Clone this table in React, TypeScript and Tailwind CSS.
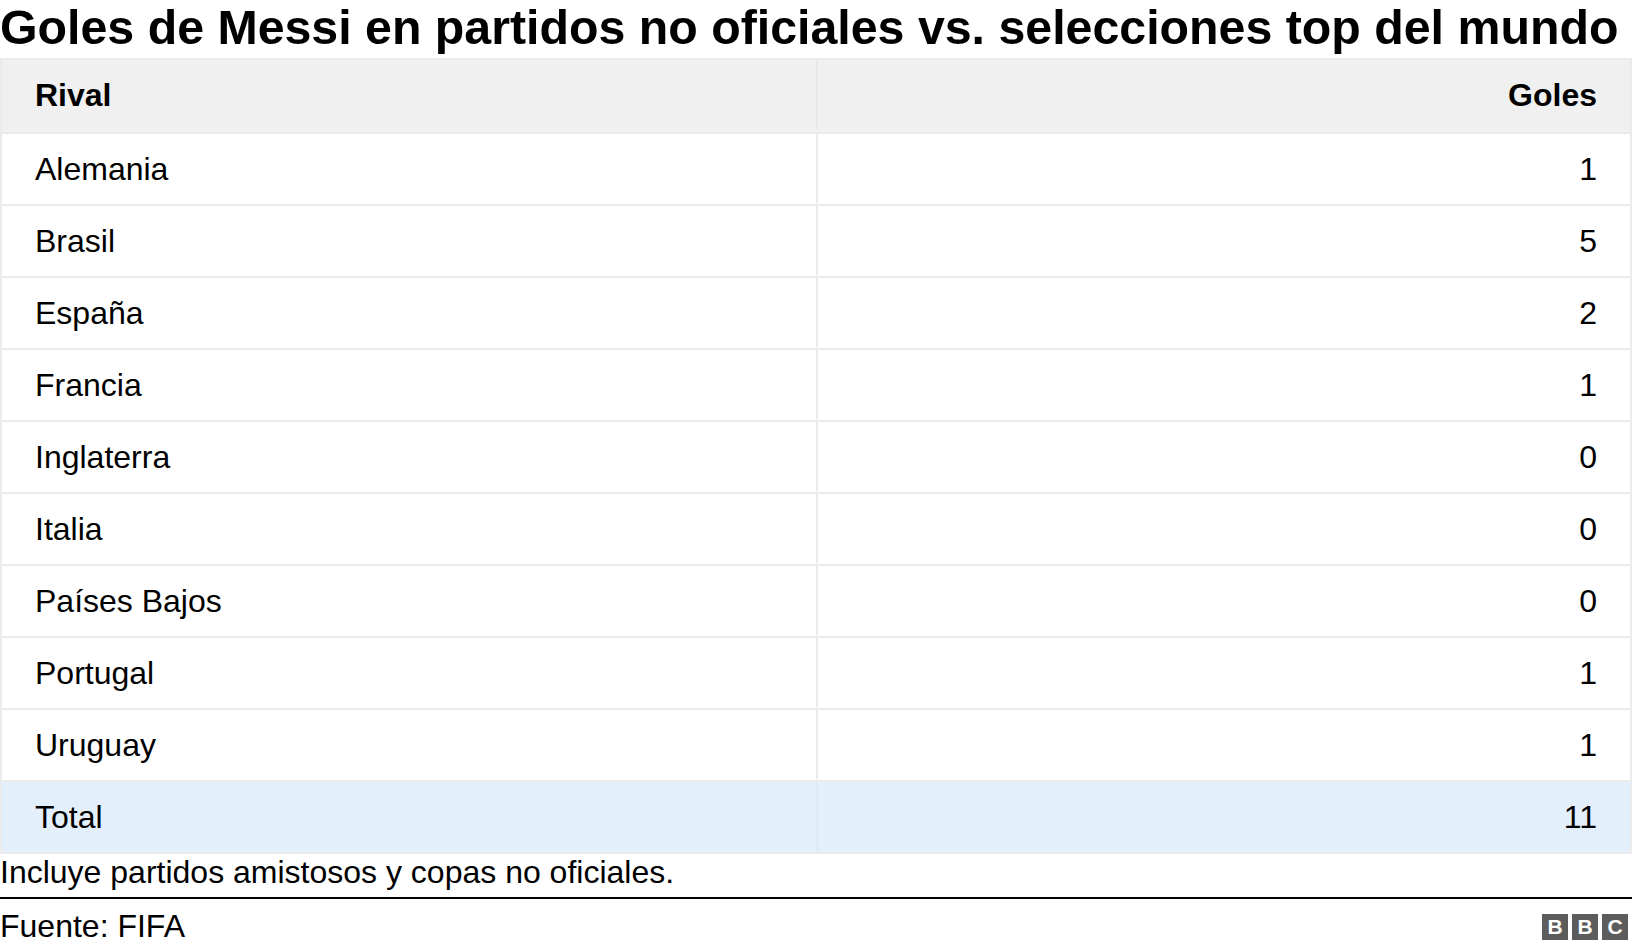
const rows: [string, string][] = [
  ["Alemania", "1"],
  ["Brasil", "5"],
  ["España", "2"],
  ["Francia", "1"],
  ["Inglaterra", "0"],
  ["Italia", "0"],
  ["Países Bajos", "0"],
  ["Portugal", "1"],
  ["Uruguay", "1"],
];

function BbcLogo() {
  return (
    <div className="flex gap-[4px] mr-[4px]">
      {["B", "B", "C"].map((letter, i) => (
        <div
          key={i}
          className="flex h-[26px] w-[26px] items-center justify-center bg-[#5c5c5c] text-[21px] font-bold leading-none text-white"
        >
          {letter}
        </div>
      ))}
    </div>
  );
}

export default function App() {
  return (
    <div className="w-[1632px] bg-white font-['Liberation_Sans',Arial,sans-serif] text-black">
      <h1 className="text-[48.3px] font-bold leading-[55px] whitespace-nowrap">
        Goles de Messi en partidos no oficiales vs. selecciones top del mundo
      </h1>

      <div className="mt-[3px] border-2 border-[#ebebeb] text-[32px]">
        <div className="grid h-[72px] grid-cols-2 bg-[#f0f0f0] pb-[3px] font-bold">
          <div className="flex items-center px-[33px]">Rival</div>
          <div className="flex items-center justify-end border-l-2 border-[#e8e8e8] px-[33px]">Goles</div>
        </div>
        {rows.map(([rival, goles]) => (
          <div key={rival} className="grid h-[72px] grid-cols-2 border-t-2 border-[#ebebeb] bg-white pb-[1px]">
            <div className="flex items-center px-[33px]">{rival}</div>
            <div className="flex items-center justify-end border-l-2 border-[#ebebeb] px-[33px]">{goles}</div>
          </div>
        ))}
        <div className="grid h-[72px] grid-cols-2 border-t-2 border-[#ebebeb] bg-[#e3effb] pb-[1px]">
          <div className="flex items-center px-[33px]">Total</div>
          <div className="flex items-center justify-end border-l-2 border-[#dde9f5] px-[33px]">11</div>
        </div>
      </div>

      <p className="text-[32px] leading-[37px]">Incluye partidos amistosos y copas no oficiales.</p>

      <div className="mt-[6px] h-[2px] bg-black" />

      <div className="mt-[9px] flex items-center justify-between">
        <span className="text-[32px] leading-[37px]">Fuente: FIFA</span>
        <BbcLogo />
      </div>
    </div>
  );
}
